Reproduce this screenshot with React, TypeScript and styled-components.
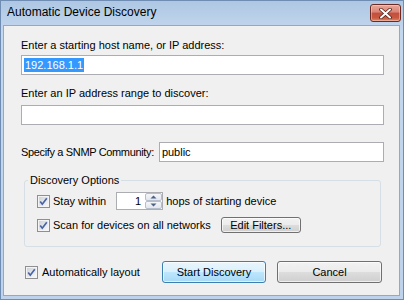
import styled, { createGlobalStyle } from "styled-components";

const GlobalStyle = createGlobalStyle`
  html, body {
    margin: 0;
    padding: 0;
  }
  body {
    width: 404px;
    height: 300px;
    overflow: hidden;
    font-family: "Liberation Sans", Arial, sans-serif;
    font-size: 11px;
    color: #000;
    background: #fff;
  }
  * {
    box-sizing: border-box;
  }
`;

const Window = styled.div`
  width: 404px;
  height: 300px;
  display: flex;
  flex-direction: column;
  padding: 0 3px 3px 2px;
  border: 1px solid #6f8db3;
  background: linear-gradient(#aec7e3, #c3d7ee 30px, #bed3eb);
`;

const TitleBar = styled.div`
  height: 24px;
  display: flex;
  align-items: flex-start;
  justify-content: space-between;
  padding: 3px 0 0 4px;
`;

const Title = styled.span`
  font-size: 12px;
  line-height: 16px;
  color: #000;
`;

const CloseBtn = styled.div`
  width: 31px;
  height: 18px;
  margin-right: -1px;
  border: 1px solid #6b2b22;
  border-radius: 3px;
  display: flex;
  align-items: center;
  justify-content: center;
  background: linear-gradient(#eaa89b, #d98373 45%, #c24f3e 50%, #c9583f 80%, #dc8a6c);
  box-shadow: inset 0 0 0 1px rgba(255, 220, 210, 0.45);
`;

const Body = styled.div`
  flex: 1;
  background: #f0f0f0;
  border: 1px solid #93a9c1;
  padding: 11px 15px 0 17px;
  display: flex;
  flex-direction: column;
`;

const Label = styled.div<{ $mt?: number; $tight?: boolean }>`
  line-height: 16px;
  margin-top: ${(p) => p.$mt ?? 0}px;
  white-space: nowrap;
  letter-spacing: ${(p) => (p.$tight ? "-0.35px" : "normal")};
`;

const TextBox = styled.div<{ $mt?: number; $grow?: boolean }>`
  height: 20px;
  margin-top: ${(p) => p.$mt ?? 0}px;
  border: 1px solid #abadb3;
  background: #fff;
  display: flex;
  align-items: center;
  padding-left: 2px;
  line-height: 14px;
  white-space: nowrap;
  ${(p) => (p.$grow ? "flex: 1;" : "")}
`;

const Selected = styled.span`
  background: #3399ff;
  color: #fff;
  padding: 0 1px;
`;

const FieldRow = styled.div<{ $mt?: number }>`
  display: flex;
  align-items: center;
  gap: 5px;
  margin-top: ${(p) => p.$mt ?? 0}px;
`;

const Group = styled.fieldset`
  margin: 10px 3px 0 3px;
  padding: 0;
  border: 1px solid #d5dfe5;
  border-radius: 3px;
  min-inline-size: 0;
`;

const Legend = styled.legend`
  margin-left: 3px;
  padding: 0 2px;
  line-height: 16px;
  font-size: 11px;
`;

const Options = styled.div`
  display: flex;
  flex-direction: column;
  gap: 6px;
  padding: 4px 12px 12px 12px;
`;

const OptionRow = styled.div`
  height: 18px;
  display: flex;
  align-items: center;
`;

const CheckLabel = styled.label<{ $gap?: number }>`
  display: flex;
  align-items: center;
  gap: ${(p) => p.$gap ?? 3}px;
  white-space: nowrap;
`;

const Spinner = styled.div`
  width: 47px;
  height: 18px;
  margin: 0 3px 0 10px;
  border: 1px solid #abadb3;
  background: #fff;
  display: flex;
`;

const SpinValue = styled.div`
  flex: 1;
  text-align: right;
  padding-right: 4px;
  line-height: 16px;
`;

const SpinButtons = styled.div`
  width: 17px;
  display: flex;
  flex-direction: column;
`;

const SpinButton = styled.div`
  flex: 1;
  border: 1px solid #b5bfcb;
  border-radius: 2px;
  background: linear-gradient(#f4f6f9, #e2e7ee);
  display: flex;
  align-items: center;
  justify-content: center;
`;

const Button = styled.div<{ $w: number; $h: number; $default?: boolean; $ml?: number }>`
  width: ${(p) => p.$w}px;
  height: ${(p) => p.$h}px;
  margin-left: ${(p) => p.$ml ?? 0}px;
  border: 1px solid ${(p) => (p.$default ? "#3c7fb1" : "#707070")};
  border-radius: 3px;
  display: flex;
  align-items: center;
  justify-content: center;
  white-space: nowrap;
  background: ${(p) =>
    p.$default
      ? "linear-gradient(#eaf6fd, #d9f0fc 50%, #bee6fd 51%, #a7d9f5)"
      : "linear-gradient(#f2f2f2, #ebebeb 50%, #dddddd 51%, #cfcfcf)"};
  box-shadow: inset 0 0 0 1px rgba(255, 255, 255, 0.65);
`;

const BottomRow = styled.div`
  display: flex;
  align-items: center;
  margin-top: 14px;
  padding-left: 4px;
  padding-right: 2px;
`;

const Buttons = styled.div`
  margin-left: auto;
  display: flex;
  gap: 11px;
`;

function CheckBox() {
  return (
    <svg width="13" height="13" viewBox="0 0 13 13">
      <defs>
        <linearGradient id="cbg" x1="0" y1="0" x2="1" y2="1">
          <stop offset="0" stopColor="#cfd3d9" />
          <stop offset="1" stopColor="#f7f7f7" />
        </linearGradient>
      </defs>
      <rect x="0.5" y="0.5" width="12" height="12" fill="#f4f4f4" stroke="#8f8f8f" />
      <rect x="2" y="2" width="9" height="9" fill="url(#cbg)" />
      <path d="M3.2 6.4 L5.3 9.2 L9.8 3.2" fill="none" stroke="#4a63a6" strokeWidth="1.7" />
    </svg>
  );
}

function CloseGlyph() {
  return (
    <svg width="13" height="11" viewBox="0 0 13 11">
      <path
        d="M2 1.5 L11 9.5 M11 1.5 L2 9.5"
        stroke="#5a1e16"
        strokeWidth="3.6"
        strokeLinecap="round"
      />
      <path d="M2 1.5 L11 9.5 M11 1.5 L2 9.5" stroke="#ffffff" strokeWidth="2" strokeLinecap="round" />
    </svg>
  );
}

function Arrow({ up }: { up?: boolean }) {
  return (
    <svg width="7" height="4" viewBox="0 0 7 4">
      <path d={up ? "M0.5 3.5 L3.5 0.5 L6.5 3.5 Z" : "M0.5 0.5 L3.5 3.5 L6.5 0.5 Z"} fill="#4d6185" />
    </svg>
  );
}

function App() {
  return (
    <>
      <GlobalStyle />
      <Window>
        <TitleBar>
          <Title>Automatic Device Discovery</Title>
          <CloseBtn>
            <CloseGlyph />
          </CloseBtn>
        </TitleBar>
        <Body>
          <Label>Enter a starting host name, or IP address:</Label>
          <TextBox $mt={2}>
            <Selected>192.168.1.1</Selected>
          </TextBox>
          <Label $mt={10}>Enter an IP address range to discover:</Label>
          <TextBox $mt={4} />
          <FieldRow $mt={17}>
            <Label $tight>Specify a SNMP Community:</Label>
            <TextBox $grow>public</TextBox>
          </FieldRow>
          <Group>
            <Legend>Discovery Options</Legend>
            <Options>
              <OptionRow>
                <CheckLabel>
                  <CheckBox />
                  Stay within
                </CheckLabel>
                <Spinner>
                  <SpinValue>1</SpinValue>
                  <SpinButtons>
                    <SpinButton>
                      <Arrow up />
                    </SpinButton>
                    <SpinButton>
                      <Arrow />
                    </SpinButton>
                  </SpinButtons>
                </Spinner>
                hops of starting device
              </OptionRow>
              <OptionRow>
                <CheckLabel>
                  <CheckBox />
                  Scan for devices on all networks
                </CheckLabel>
                <Button $w={80} $h={16} $ml={10}>
                  Edit Filters...
                </Button>
              </OptionRow>
            </Options>
          </Group>
          <BottomRow>
            <CheckLabel $gap={4}>
              <CheckBox />
              Automatically layout
            </CheckLabel>
            <Buttons>
              <Button $w={104} $h={22} $default>
                Start Discovery
              </Button>
              <Button $w={105} $h={22}>
                Cancel
              </Button>
            </Buttons>
          </BottomRow>
        </Body>
      </Window>
    </>
  );
}

export default App;
